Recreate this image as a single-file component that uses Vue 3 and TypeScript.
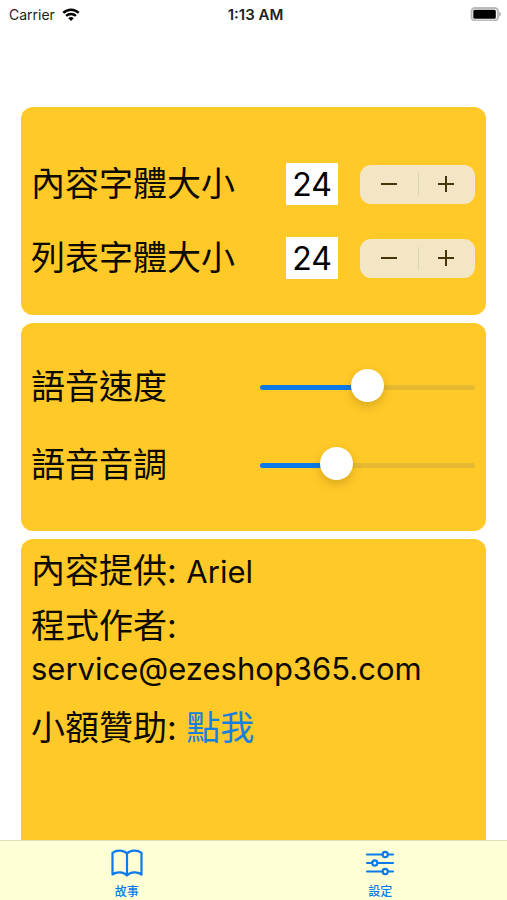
<script setup lang="ts">
import { reactive } from 'vue'

interface Setting {
  id: string
  label: string
  value: number
}

const sizes = reactive<Setting[]>([
  { id: 'content-size', label: '內容字體大小', value: 24 },
  { id: 'list-size', label: '列表字體大小', value: 24 },
])

const voices = reactive<Setting[]>([
  { id: 'voice-speed', label: '語音速度', value: 50 },
  { id: 'voice-pitch', label: '語音音調', value: 33 },
])
</script>

<template>
  <div class="screen">
    <header class="status">
      <div class="carrier">
        <span>Carrier</span>
        <svg class="wifi" viewBox="0 0 18 13" aria-hidden="true">
          <path d="M1.3 4.9a11 11 0 0 1 15.4 0" />
          <path d="M4.1 7.9a7.1 7.1 0 0 1 9.8 0" />
          <path class="dot" d="M9 13 6.2 10.3a4 4 0 0 1 5.6 0Z" />
        </svg>
      </div>
      <span class="time">1:13 AM</span>
      <svg class="battery" viewBox="0 0 32 14" aria-hidden="true">
        <rect class="shell" x="1.5" y="1" width="26.500" height="12.500" rx="3.500" />
        <rect x="3.300" y="2.800" width="22.500" height="9" rx="1.500" />
        <path class="cap" d="M29.3 4.8c2.200.8 2.200 4 0 4.800Z" />
      </svg>
    </header>

    <main class="cards">
      <section class="card sizes">
        <div v-for="s in sizes" :key="s.id" class="row">
          <label :for="s.id">{{ s.label }}</label>
          <input :id="s.id" v-model.number="s.value" class="number" type="text" inputmode="numeric" />
          <div class="stepper">
            <button type="button" :aria-label="s.label + ' −'" @click="s.value--">
              <svg viewBox="0 0 18 18"><path d="M1 9h16" /></svg>
            </button>
            <button type="button" :aria-label="s.label + ' +'" @click="s.value++">
              <svg viewBox="0 0 18 18"><path d="M1 9h16M9 1v16" /></svg>
            </button>
          </div>
        </div>
      </section>

      <section class="card voices">
        <div v-for="v in voices" :key="v.id" class="row">
          <label :for="v.id">{{ v.label }}</label>
          <input
            :id="v.id"
            v-model.number="v.value"
            class="slider"
            type="range"
            min="0"
            max="100"
            :style="{ '--fill': v.value + '%' }"
          />
        </div>
      </section>

      <section class="card about">
        <p>內容提供: <span class="latin">Ariel</span></p>
        <p>程式作者:<br /><span class="latin">service@ezeshop365.com</span></p>
        <p class="donate">小額贊助: <a href="#">點我</a></p>
      </section>
    </main>

    <nav class="tabs">
      <a href="#">
        <svg viewBox="0 0 32 28" aria-hidden="true">
          <path d="M16 4.5C12.5.8 5.500.8 1.500 3.800V25.500C5.500 22.600 12.500 22.600 16 26.500C19.500 22.600 26.500 22.600 30.500 25.500V3.800C26.500.8 19.500.8 16 4.500ZM16 4.500V26" />
        </svg>
        <span>故事</span>
      </a>
      <a href="#">
        <svg viewBox="0 0 32 28" aria-hidden="true">
          <path d="M3 5.500h15.500M24 5.500h5M3 14h5M13.500 14H29M3 22.500h15.500M24 22.500h5" />
          <circle cx="21.200" cy="5.500" r="2.600" />
          <circle cx="10.800" cy="14" r="2.600" />
          <circle cx="21.200" cy="22.500" r="2.600" />
        </svg>
        <span>設定</span>
      </a>
    </nav>
  </div>
</template>

<style>
body {
  background: #fff;
}
</style>

<style scoped>
.screen {
  display: flex;
  flex-direction: column;
  min-height: 100vh;
  color: #0c0a02;
  font-family: Inter, 'Noto Sans CJK TC', sans-serif;
}

.status {
  display: grid;
  grid-template-columns: 1fr auto 1fr;
  align-items: center;
  height: 28px;
  padding: 0 5px 0 9px;
  font-size: 14px;
  color: #222;
}

.carrier {
  display: flex;
  align-items: center;
  gap: 7px;
}

.wifi {
  width: 18px;
  height: 13px;
  fill: none;
  stroke: #000;
  stroke-width: 2.5;
}

.wifi .dot {
  fill: #000;
  stroke: none;
}

.time {
  font-size: 15px;
  font-weight: 600;
}

.battery {
  justify-self: end;
  width: 32px;
  height: 14px;
}

.battery .shell {
  fill: #fff;
  stroke: #bbb;
  stroke-width: 2;
}

.battery .cap {
  fill: #aaa;
}

.cards {
  flex: 1;
  display: flex;
  flex-direction: column;
  gap: 8px;
  padding: 79px 21px 0;
}

.card {
  padding: 0 11px 0 10px;
  border-radius: 12px;
  background: #ffc928;
  font-size: 34px;
}

.row {
  display: flex;
  align-items: center;
}

.row label {
  flex: 1;
  line-height: 42px;
  white-space: nowrap;
}

.sizes {
  display: grid;
  gap: 32px;
  padding-top: 56px;
  padding-bottom: 36px;
}

.number {
  box-sizing: border-box;
  width: 52px;
  height: 42px;
  margin-right: 22px;
  padding: 0;
  border: 0;
  border-radius: 0;
  background: #fff;
  color: #000;
  font: 32px Inter, sans-serif;
  text-align: center;
}

.stepper {
  display: flex;
  width: 115px;
  height: 39px;
  border-radius: 11px;
  background: #f2e6c5;
}

.stepper button {
  flex: 1;
  display: grid;
  place-items: center;
  padding: 0;
  border: 0;
  background: none;
}

.stepper button + button {
  background: linear-gradient(#ddd2b2, #ddd2b2) left center / 1px 23px no-repeat;
}

.stepper svg {
  width: 18px;
  height: 18px;
  fill: none;
  stroke: #463508;
  stroke-width: 2;
}

.voices {
  display: grid;
  gap: 36px;
  padding-top: 43px;
  padding-bottom: 45px;
}

.slider {
  appearance: none;
  width: 215px;
  height: 34px;
  margin: 0;
  background: none;
}

.slider::-webkit-slider-runnable-track {
  height: 5px;
  border-radius: 3px;
  background: linear-gradient(to right, #0b7ae6 var(--fill), #e5b931 var(--fill));
}

.slider::-webkit-slider-thumb {
  appearance: none;
  width: 33px;
  height: 33px;
  margin-top: -16px;
  border-radius: 50%;
  background: #fff;
  box-shadow: 0 4px 10px rgba(100, 75, 0, 0.25);
}

.about {
  flex: 1;
  display: flex;
  flex-direction: column;
  gap: 12px;
  padding-top: 11px;
  border-radius: 12px 12px 0 0;
}

.about p {
  margin: 0;
  line-height: 42px;
}

.about .donate {
  padding-top: 5px;
}

.about .latin {
  font-size: 31px;
}

.about a {
  color: #1680dc;
  text-decoration: none;
}

.tabs {
  position: sticky;
  bottom: 0;
  display: flex;
  box-sizing: border-box;
  height: 60px;
  border-top: 1px solid #e3dfb4;
  background: #ffffd5;
}

.tabs a {
  flex: 1;
  display: flex;
  flex-direction: column;
  align-items: center;
  gap: 7px;
  padding-top: 8px;
  color: #0b7aec;
  font-size: 12px;
  font-weight: 500;
  line-height: 16px;
  text-decoration: none;
}

.tabs svg {
  width: 32px;
  height: 28px;
  fill: none;
  stroke: currentColor;
  stroke-width: 2.2;
  stroke-linejoin: round;
  stroke-linecap: round;
}
</style>
